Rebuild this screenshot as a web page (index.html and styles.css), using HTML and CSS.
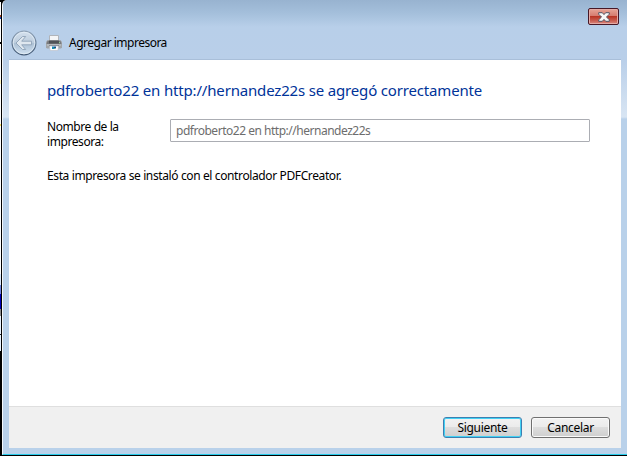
FILE: index.html
```
<!DOCTYPE html>
<html lang="es">
<head>
<meta charset="utf-8">
<title>Agregar impresora</title>
<link rel="stylesheet" href="styles.css">
</head>
<body>
<div class="desktop">
  <div class="backdrop"></div>
  <div class="window">
    <header class="titlebar">
      <button class="close" aria-label="Cerrar">
        <svg width="12" height="10" viewBox="0 0 12 10"><path d="M.7 .7H4.300L6 2.600 7.700.7h3.600v1.500L8.500 5l2.800 2.800v1.500H7.700L6 7.400 4.300 9.300H.7V7.800L3.500 5 .7 2.200z" fill="#f7f7f7" stroke="#535666" stroke-width="1"/></svg>
      </button>
      <div class="heading">
        <svg class="back" width="26" height="26" viewBox="0 0 26 26">
          <defs>
            <linearGradient id="disc" x2="0" y2="1"><stop stop-color="#d5e1ee"/><stop offset=".48" stop-color="#bdcddd"/><stop offset=".52" stop-color="#adc1d5"/><stop offset="1" stop-color="#d0e1f1"/></linearGradient>
            <linearGradient id="rim" x2="0" y2="1"><stop stop-color="#8fa2b7"/><stop offset="1" stop-color="#3f5672"/></linearGradient>
          </defs>
          <circle cx="13" cy="13" r="11.900" fill="url(#disc)" stroke="url(#rim)" stroke-width="1.200"/>
          <circle cx="13" cy="13" r="10.800" fill="none" stroke="#e4edf6" stroke-opacity=".8"/>
          <path d="M5 13l6.500-6.500h3.200L10.700 11.200H20.500v3.600H10.700l4 4.700h-3.200z" fill="#dfe7ef" stroke="#8fa3b8" stroke-width=".9" stroke-linejoin="round"/>
        </svg>
        <svg class="printer" width="16" height="16" viewBox="0 0 16 16">
          <path d="M3.500 6V.5h9V6" fill="#f4f5f7" stroke="#b0b4ba"/>
          <path d="M1.500 5h13L16 7v5.500l-1 1H1l-1-1V7z" fill="#a2a6aa"/>
          <path d="M1.500 6h13l1 3H.5z" fill="#77797d"/>
          <path d="M3 5.500h10v3H3z" fill="#505256"/>
          <path d="M1 9.500h14v1H1z" fill="#c9ccd0"/>
          <path d="M3 10.500h10v1H3z" fill="#4b4e52"/>
          <path d="M3.500 11h9l-.6 4.500H4.100z" fill="#fff" stroke="#b9bec6" stroke-width=".6"/>
          <path d="M6 11.500h2V14H6z" fill="#1688b6"/>
          <path d="M8 11.500h2v2H8z" fill="#174d93"/>
          <path d="M8 13h1v1H8z" fill="#5bb36c"/>
          <path d="M13 7h1v1h-1z" fill="#8cd98c"/>
        </svg>
        <span class="text title">Agregar impresora</span>
      </div>
    </header>
    <main class="client">
      <section class="page">
        <h1 class="text">pdfroberto22 en http://hernandez22s se agregó correctamente</h1>
        <div class="field">
          <label class="label">Nombre de la impresora:</label>
          <div class="input"><span class="text value">pdfroberto22 en http://hernandez22s</span></div>
        </div>
        <p class="text note">Esta impresora se instaló con el controlador PDFCreator.</p>
      </section>
      <footer class="actions">
        <button class="button primary"><span class="text next">Siguiente</span></button>
        <button class="button"><span class="text cancel">Cancelar</span></button>
      </footer>
    </main>
  </div>
</div>
</body>
</html>
```
FILE: styles.css
```
* { box-sizing: border-box; }
body {
  margin: 0;
  overflow: hidden;
  font: 12px/15px "Noto Sans", "Open Sans", sans-serif;
  color: #000;
}
.desktop {
  display: flex;
  width: 627px;
  height: 456px;
  background: #000;
}
.backdrop {
  width: 2px;
  height: 456px;
  border-right: 1px solid #000;
  background: linear-gradient(#000 0 2px, #fff 2px 15px, #a3401b 15px 17px, #174ab5 17px 19px, #fff 19px 42px, #000 42px 44px, #fff 44px 80px, #fff6bd 80px 84px, #fff 84px 124px, #ffe36a 124px 126px, #fff 126px 274px, #dce9fb 274px 285px, #7185df 285px 294px, #0000b8 294px 309px, #8c8c8c 309px 316px, #e8f2ff 316px 334px, #222 334px 335px, #e8f2ff 335px 351px, #000 351px);
}
.window {
  flex: 1;
  height: 455px;
  padding: 0 6px 6px;
  border-left: 1px solid #f4f8fc;
  border-bottom: 1px solid #27cbea;
  border-top-left-radius: 5px;
  background: linear-gradient(#98b3d0 0, #a4bfdb 13px, #b8cfe9 27px, #b9cfe9 60px, #d8e5f3 117px, #b9d1ea 119px);
}
.titlebar {
  display: flex;
  flex-direction: column;
  height: 60px;
  padding-top: 8px;
  border-bottom: 1px solid #a9bfd9;
}
.close {
  display: flex;
  align-items: center;
  justify-content: center;
  align-self: flex-end;
  width: 31px;
  height: 17px;
  margin-right: 2px;
  padding: 0;
  border: 1px solid #471827;
  border-radius: 2px;
  box-shadow: inset 0 0 0 1px #e5aaa4;
  background: linear-gradient(#e7a496 0, #d5796c 48%, #b93524 50%, #c7594c 75%, #d98980);
}
.heading {
  display: flex;
  align-items: center;
  height: 26px;
  margin-top: 5px;
  padding-left: 2px;
}
.back { flex: none; }
.printer { flex: none; margin-left: 9px; }
.text { display: block; white-space: nowrap; }
.title { margin: -1px 0 0 7px; letter-spacing: -0.5px; }
.client {
  display: flex;
  flex-direction: column;
  height: 388px;
  background: #fff;
}
.page { flex: 1; padding: 20px 31px 0 38px; }
h1 {
  margin: 0;
  font-size: 15px;
  font-weight: 400;
  line-height: 20px;
  color: #003399;
  letter-spacing: -0.17px;
}
.field { display: flex; margin-top: 19px; }
.label { width: 123px; padding-right: 30px; letter-spacing: -0.42px; }
.input {
  width: 420px;
  height: 23px;
  padding: 3px 5px;
  border: 1px solid #abadb3;
  border-radius: 1px;
  color: #6d6d6d;
}
.value { letter-spacing: -0.48px; }
.note { margin: 19px 0 0; letter-spacing: -0.38px; }
.actions {
  display: flex;
  justify-content: flex-end;
  gap: 9px;
  height: 42px;
  padding: 10px 11px 0 0;
  border-top: 1px solid #dfdfdf;
  background: #f0f0f0;
}
.button {
  display: flex;
  align-items: center;
  justify-content: center;
  width: 79px;
  height: 21px;
  padding: 0;
  border: 1px solid #707070;
  border-radius: 3px;
  box-shadow: inset 0 0 0 1px #fafafa;
  background: linear-gradient(#f2f2f2, #ebebeb 49%, #dddddd 50%, #cfcfcf);
  font: inherit;
  color: #000;
}
.primary {
  border-color: #3c7fb1;
  box-shadow: inset 0 0 0 1px #42d1f4;
}
.next, .cancel { letter-spacing: -0.3px; }
```
